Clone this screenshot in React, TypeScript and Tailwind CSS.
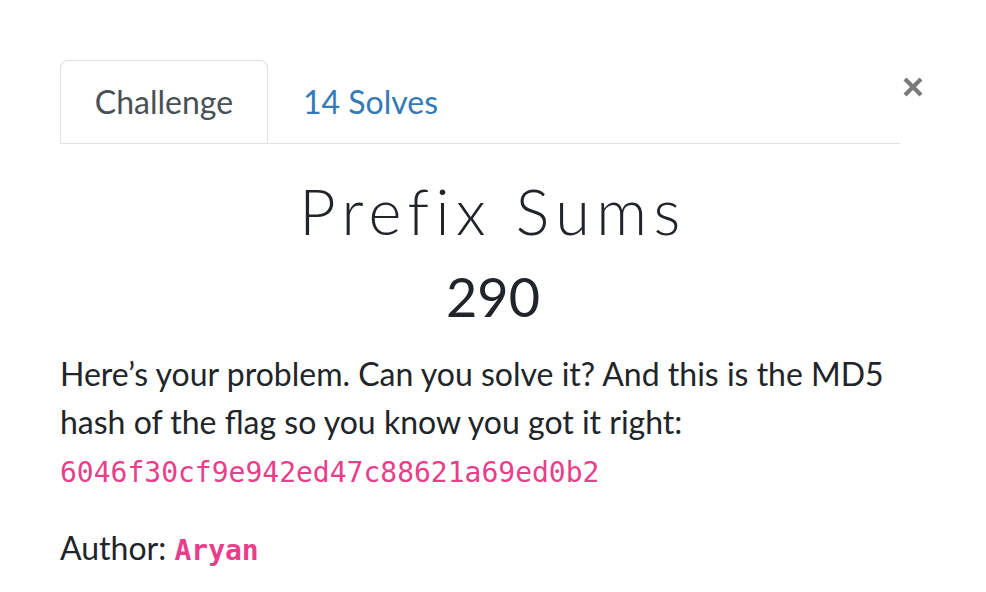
export default function App() {
  return (
    <div className="w-full h-[592px] bg-white px-[60px] pt-[60px] font-['Lato','Open_Sans',sans-serif] text-[#212529]">
      <div className="flex items-start">
        <nav className="flex flex-1 border-b border-[#dee2e6]">
          <div className="-mb-px w-[208px] h-[83px] flex items-center justify-center rounded-t-lg border border-[#dee2e6] border-b-white bg-white text-[32px] text-[#495057]">
            Challenge
          </div>
          <div className="h-[83px] flex items-center px-[35px] text-[32px] text-[#337ab7]">
            14 Solves
          </div>
        </nav>
        <button className="mt-[14px] w-[26px] h-[26px] flex items-center justify-center text-[#7a7a7a]">
          <svg width="22" height="22" viewBox="0 0 22 22">
            <path d="M3 3 L19 19 M19 3 L3 19" stroke="currentColor" strokeWidth="4.2" strokeLinecap="butt" />
          </svg>
        </button>
      </div>
      <div className="text-center pt-[31px]">
        <h2 className="text-[63px] leading-[72px] font-light tracking-[6.5px]">Prefix Sums</h2>
        <h3 className="text-[54px] leading-[62px] mt-[19px]">290</h3>
      </div>
      <div className="mt-[22px] text-[32px] leading-[48px] pr-[10px]">
        <p>
          Here’s your problem. Can you solve it? And this is the MD5 hash of the flag so you know you got it right:{' '}
          <code className="font-['DejaVu_Sans_Mono',monospace] text-[28px] text-[#e83e8c]">6046f30cf9e942ed47c88621a69ed0b2</code>
        </p>
        <p className="mt-[27px]">
          Author: <code className="font-['DejaVu_Sans_Mono',monospace] text-[28px] font-bold text-[#e83e8c]">Aryan</code>
        </p>
      </div>
    </div>
  );
}
